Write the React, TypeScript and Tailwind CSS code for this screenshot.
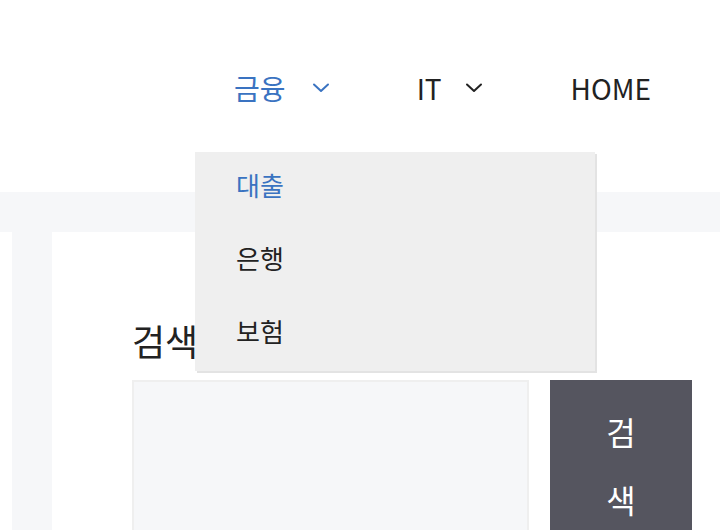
import React from "react";

const Chevron = ({ color }: { color: string }) => (
  <svg width="18" height="10" viewBox="0 0 18 10" fill="none" className="block">
    <polyline points="2,1.5 9,8 16,1.5" stroke={color} strokeWidth="2" strokeLinecap="round" strokeLinejoin="round" />
  </svg>
);

export default function App() {
  const font = { fontFamily: '"Noto Sans CJK KR", "Noto Sans", sans-serif' };
  return (
    <div className="relative w-[720px] h-[530px] overflow-hidden bg-white" style={font}>
      <header className="h-[192px] bg-white">
        <nav className="flex justify-end items-center pt-[68px] pr-[69px] text-[28px] leading-[40px] text-[#222222]">
          <div className="flex items-center">
            <span className="text-[#3a73c1]">금융</span>
            <span className="ml-[26px]"><Chevron color="#3a73c1" /></span>
          </div>
          <div className="flex items-center ml-[87px]">
            <span>IT</span>
            <span className="ml-[23px]"><Chevron color="#222222" /></span>
          </div>
          <div className="ml-[88px]">
            <span>HOME</span>
          </div>
        </nav>
      </header>
      <div className="h-[40px] bg-[#f6f7f9]" />
      <div className="flex h-[298px]">
        <div className="w-[12px] bg-white" />
        <div className="w-[40px] bg-[#f6f7f9]" />
        <main className="flex-1 bg-white pl-[80px] pt-[84px]">
          <h1 className="text-[36px] leading-[48px] text-[#222222] font-normal">검색</h1>
          <div className="flex mt-[16px] gap-[21px]">
            <div className="w-[397px] h-[200px] bg-[#f6f7f9] border-2 border-[#efefef]" />
            <button className="w-[142px] h-[200px] bg-[#55555f] text-white text-[32px] leading-[68px] flex flex-col items-center justify-start pt-[17px]">
              <span>검</span>
              <span>색</span>
            </button>
          </div>
        </main>
      </div>
      <div className="absolute left-[195px] top-[152px] w-[400px] h-[219px] bg-[#efefef] shadow-[2px_2px_0_#e3e3e3] pt-[9px] pl-[41px] flex flex-col gap-[25px] text-[26px]">
        <div className="h-[48px] leading-[48px] text-[#3a73c1]">대출</div>
        <div className="h-[48px] leading-[48px] text-[#222222]">은행</div>
        <div className="h-[48px] leading-[48px] text-[#222222]">보험</div>
      </div>
    </div>
  );
}
